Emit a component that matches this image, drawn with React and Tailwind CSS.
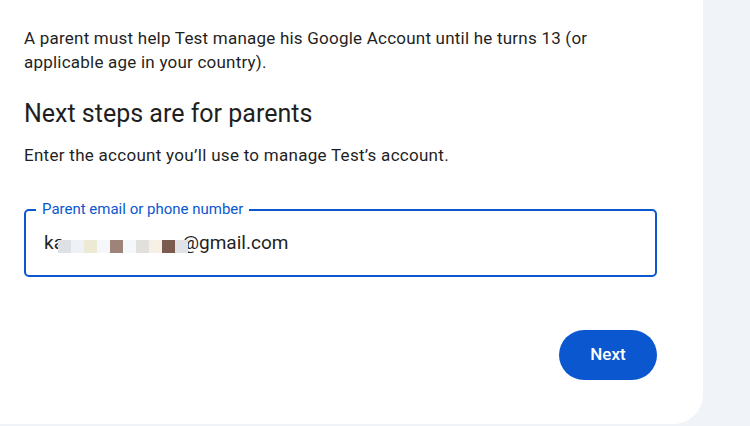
import React from "react";

const blocks = ["#dde1e5", "#eef2f6", "#ece9d5", "#f5f7fa", "#9e8478", "#f5f8fa", "#e2e0dd", "#f6f0e6", "#7a5b4e", "#e0e2e5"];

export default function App() {
  return (
    <div className="w-[750px] h-[426px] bg-[#f0f4f9] overflow-hidden" style={{ fontFamily: "Roboto, 'Liberation Sans', sans-serif" }}>
      <div className="w-[703px] h-[424px] bg-white rounded-br-[30px] pl-[24px] pt-[26px] text-[#1f1f1f]">
        <div className="w-[634px]">
          <p className="text-[17px] leading-[24px] tracking-[0.22px] w-[620px]">
            A parent must help Test manage his Google Account until he turns 13 (or applicable age in your country).
          </p>
          <h1 className="mt-[24px] text-[25px] leading-[32px]">Next steps are for parents</h1>
          <p className="mt-[13px] text-[17px] leading-[24px] tracking-[0.28px]">Enter the account you’ll use to manage Test’s account.</p>
          <div className="relative mt-[42px] h-[68px] w-[633px] border-2 border-[#0b57d0] rounded-[5px] flex items-center pl-[18px]">
            <span className="absolute -top-[11px] left-[10px] bg-white px-[6px] text-[15px] leading-[18px] text-[#0b57d0]">
              Parent email or phone number
            </span>
            <div className="flex items-center text-[19px] leading-[24px] text-[#1f1f1f]">
              <span>ka</span>
              <div className="relative flex -ml-[6px] -mr-[6px] mt-[6px]">
                {blocks.map((c, i) => (
                  <div key={i} className="w-[13px] h-[13px]" style={{ backgroundColor: c }} />
                ))}
              </div>
              <span>@gmail.com</span>
            </div>
          </div>
          <div className="flex justify-end mt-[53px] pr-[1px]">
            <button className="w-[98px] h-[50px] rounded-full bg-[#0b57d0] text-white text-[17px] font-medium">Next</button>
          </div>
        </div>
      </div>
    </div>
  );
}
